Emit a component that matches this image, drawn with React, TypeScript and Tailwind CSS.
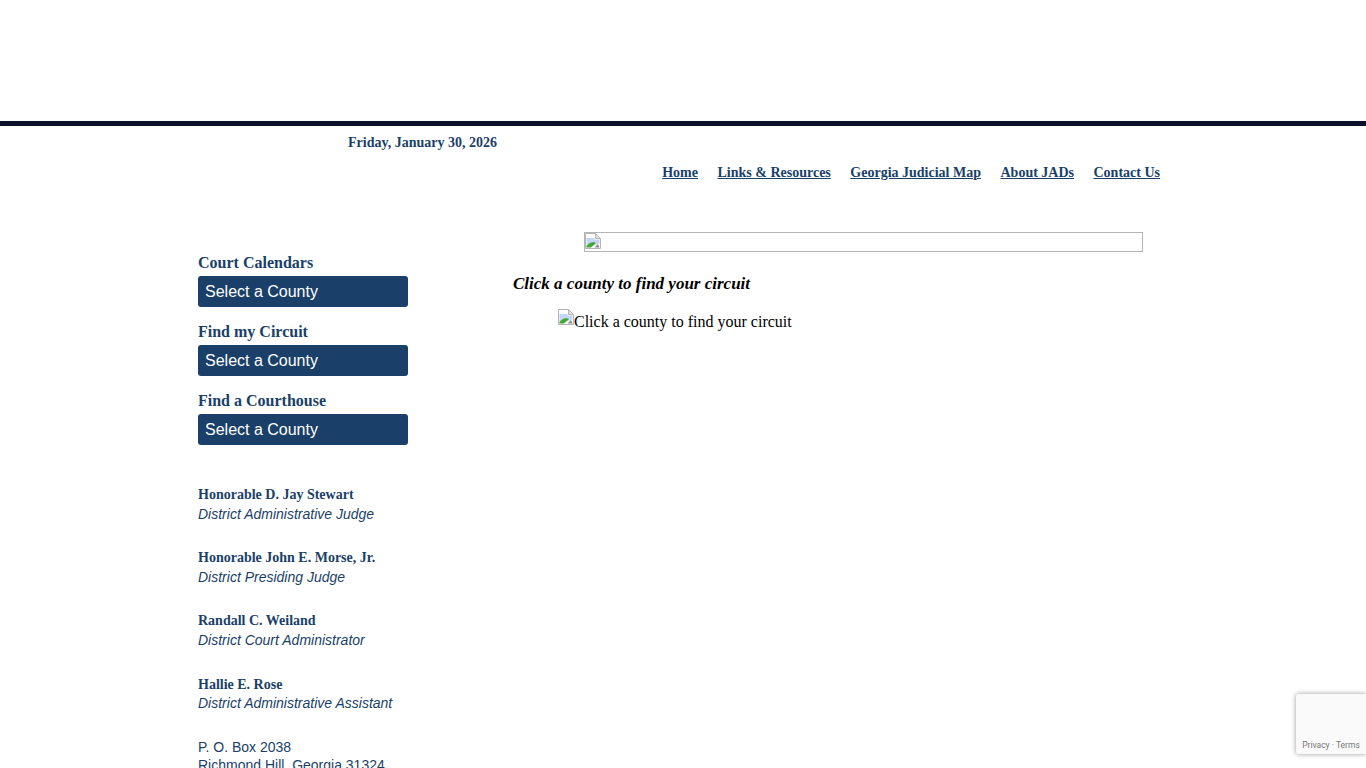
const navy = "text-[#1a3f68]";

function BrokenIcon() {
  return (
    <svg width="16" height="16" viewBox="0 0 16 16" className="shrink-0">
      <path d="M0.5 0.5H10.5L15.5 5.5V15.5H0.5Z" fill="#fff" stroke="#b4b4b4" />
      <path d="M10.5 0.5V5.5H15.5Z" fill="#e4e4e4" stroke="#b4b4b4" />
      <path d="M1.5 5H9.5V6.5H14.5V10.5L1.5 14.5Z" fill="#c3d6f5" />
      <path d="M1.5 14.5V13C4 9.5 7 8.5 10 9.5L11 10L6 14.5Z" fill="#43a82f" />
      <path d="M9.5 14.5L13 11L14.5 14.5Z" fill="#8c8c8c" />
    </svg>
  );
}

function Selector({ title }: { title: string }) {
  return (
    <div className="flex flex-col">
      <div className={`font-['Liberation_Serif',serif] font-bold text-[16px] leading-[18px] h-[19px] ${navy}`}>{title}</div>
      <div className="mt-[3px] w-[210px] h-[31px] rounded-[3px] bg-[#1a3f68] text-white font-['Liberation_Sans',sans-serif] text-[16px] leading-[31px] pl-[7px]">
        Select a County
      </div>
    </div>
  );
}

function Person({ name, role, cls, roleCls = "" }: { name: string; role: string; cls: string; roleCls?: string }) {
  return (
    <div className={cls}>
      <div className={`font-['Liberation_Serif',serif] font-bold text-[14px] leading-[20px] ${navy}`}>{name}</div>
      <div className={`font-['Liberation_Sans',sans-serif] italic text-[14px] leading-[19px] ${navy} ${roleCls}`}>{role}</div>
    </div>
  );
}

export default function App() {
  const links = ["Home", "Links & Resources", "Georgia Judicial Map", "About JADs", "Contact Us"];
  return (
    <div className="relative h-screen overflow-hidden bg-white">
      <div className="h-[121px]" />
      <div className="h-[5px] bg-[#0a1128]" />
      <div className="w-[970px] ml-[198px]">
        <div className={`pl-[150px] pt-[9px] font-['Liberation_Serif',serif] font-bold text-[14px] leading-[16px] h-[25px] ${navy}`}>
          Friday, January 30, 2026
        </div>
        <nav className={`mt-[14px] h-[16px] flex justify-end gap-[19.5px] pr-[8px] font-['Liberation_Serif',serif] font-bold text-[14px] leading-[16px] underline ${navy}`}>
          {links.map((l) => (
            <span key={l}>{l}</span>
          ))}
        </nav>
        <div className="flex mt-[51px]">
          <aside className="w-[315px] shrink-0 pt-[22px]">
            <div className="flex flex-col gap-[16px]">
              <Selector title="Court Calendars" />
              <Selector title="Find my Circuit" />
              <Selector title="Find a Courthouse" />
            </div>
            <Person cls="mt-[40px]" name="Honorable D. Jay Stewart" role="District Administrative Judge" />
            <Person cls="mt-[24px]" name="Honorable John E. Morse, Jr." role="District Presiding Judge" />
            <Person cls="mt-[24px]" name="Randall C. Weiland" role="District Court Administrator" />
            <Person cls="mt-[25px]" name="Hallie E. Rose" role="District Administrative Assistant" roleCls="-mt-[1px]" />
            <div className={`mt-[25px] font-['Liberation_Sans',sans-serif] text-[14px] leading-[18px] ${navy}`}>
              <div>P. O. Box 2038</div>
              <div>Richmond Hill, Georgia 31324</div>
            </div>
          </aside>
          <main className="flex-1 min-w-0">
            <div className="ml-[71px] w-[559px] h-[20px] border border-[#b4b4b4] overflow-hidden">
              <BrokenIcon />
            </div>
            <div className="mt-[22px] font-['Liberation_Serif',serif] font-bold italic text-[17px] leading-[20px] text-black">
              Click a county to find your circuit
            </div>
            <div className="mt-[15px] ml-[45px] flex items-start font-['Liberation_Serif',serif] text-[16px] leading-[18px] text-black">
              <BrokenIcon />
              <span className="mt-[4px]">Click a county to find your circuit</span>
            </div>
          </main>
        </div>
      </div>
      <div className="absolute left-[1296px] top-[694px] w-[70px] h-[60px] bg-[#fafafa] rounded-l-[2px] shadow-[0_0_5px_rgba(128,128,128,0.8)] flex items-end justify-center pb-[4px] font-['Roboto',sans-serif] text-[8.5px] leading-[10px] text-[#777777] whitespace-nowrap">
        Privacy · Terms
      </div>
    </div>
  );
}
